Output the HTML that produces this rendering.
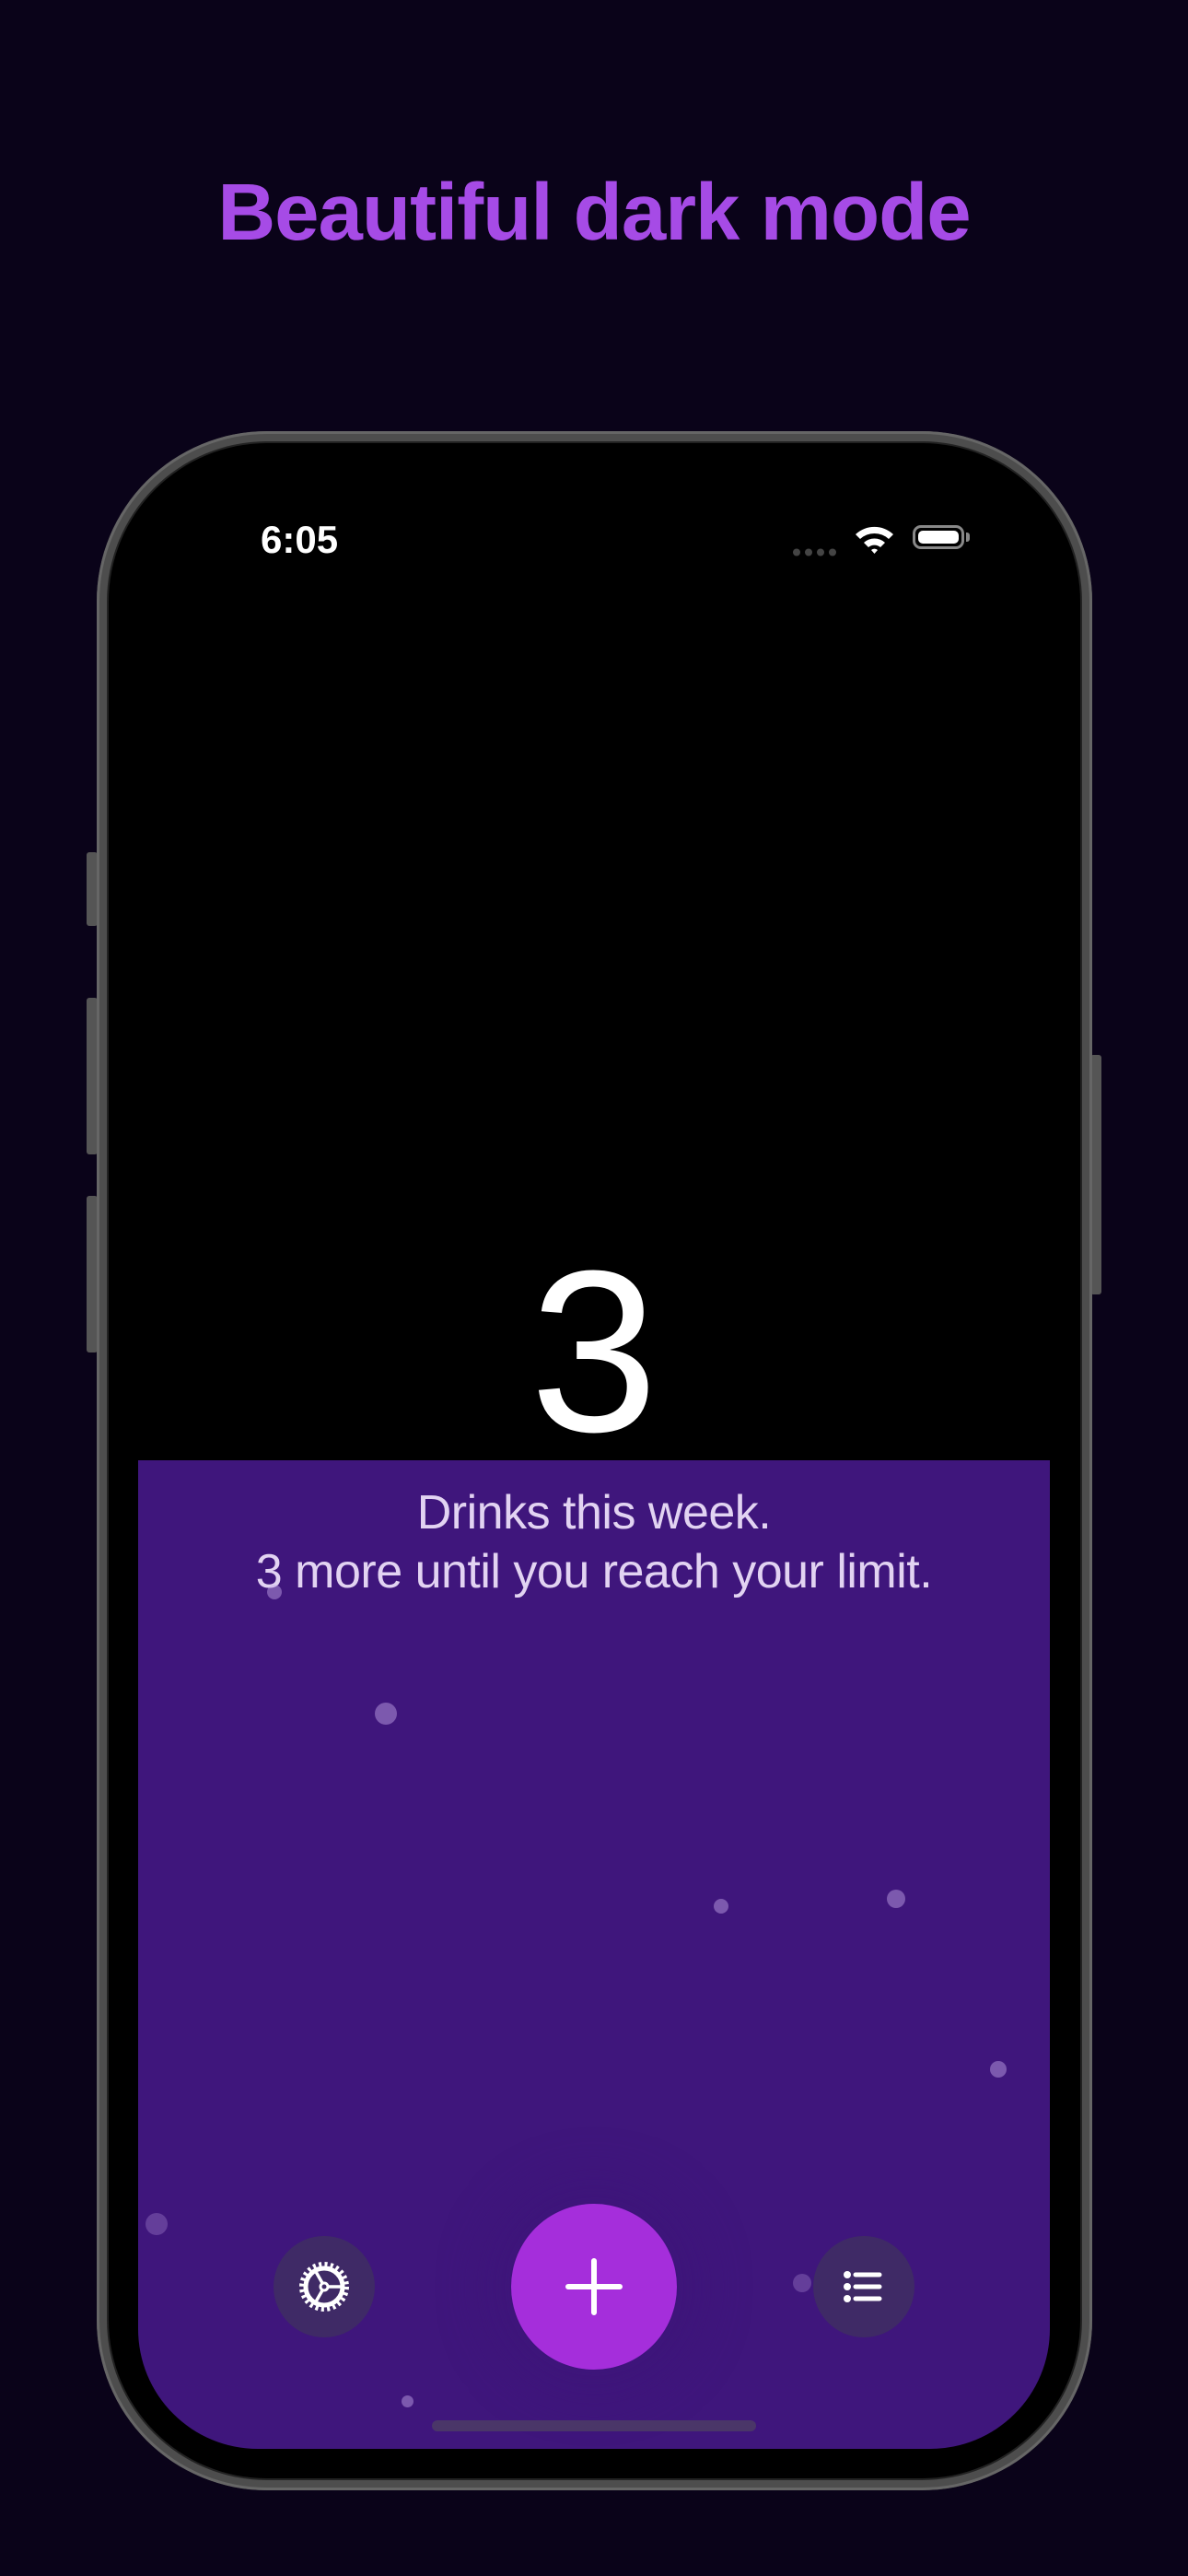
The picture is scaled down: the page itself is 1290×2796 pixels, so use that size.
<!DOCTYPE html>
<html><head><meta charset="utf-8"><style>
html,body{margin:0;padding:0}
body{width:1290px;height:2796px;background:#0a0319;position:relative;overflow:hidden;font-family:"Liberation Sans",sans-serif}
.abs{position:absolute}
.title{left:0;width:1290px;top:181px;text-align:center;color:#a64be6;font-weight:bold;font-size:87px;letter-spacing:-1px}
.frame{left:105px;top:468px;width:1081px;height:2235px;border-radius:185px;background:#4d4d4d;box-shadow:inset 0 0 0 3px #666}
.bezel{left:118px;top:481px;width:1055px;height:2209px;border-radius:172px;background:#000;box-shadow:0 0 0 2px #222}
.screen{left:150px;top:508px;width:990px;height:2150px;border-radius:130px;background:#000;overflow:hidden}
.purple{left:0;top:1077px;width:990px;height:1073px;background:#3f167c}
.dot{position:absolute;border-radius:50%;background:rgba(200,170,235,0.45)}
.btn{position:absolute;border-radius:50%;background:#3f2a66}
.btn.big{background:#a52edb}
.side{background:#555;border-radius:3px}
</style></head><body>
<div class="abs title">Beautiful dark mode</div>
<div class="abs side" style="left:94px;top:925px;width:12px;height:80px"></div>
<div class="abs side" style="left:94px;top:1083px;width:12px;height:170px"></div>
<div class="abs side" style="left:94px;top:1298px;width:12px;height:170px"></div>
<div class="abs side" style="left:1184px;top:1145px;width:12px;height:260px"></div>
<div class="abs frame"></div>
<div class="abs bezel"></div>
<div class="abs screen">
  <div class="abs" style="left:133px;top:54px;color:#fff;font-size:42px;font-weight:bold">6:05</div>
  <div class="abs" style="left:711px;top:83px;width:49px;height:9px">
    <svg width="49" height="9"><g fill="#444"><circle cx="4" cy="4.5" r="4"/><circle cx="17" cy="4.5" r="4"/><circle cx="30" cy="4.5" r="4"/><circle cx="43" cy="4.5" r="4"/></g></svg>
  </div>
  <svg class="abs" style="left:777px;top:62px" width="45" height="32" viewBox="0 0 45 32"><path d="M2 10 A30 30 0 0 1 43 10 L38 15 A23 23 0 0 0 7 15Z M11 19 A17 17 0 0 1 34 19 L29 24 A10 10 0 0 0 16 24Z M19 27 L22.5 31 L26 27 A5 5 0 0 0 19 27Z" fill="#fff"/></svg>
  <div class="abs" style="left:841px;top:62px;width:56px;height:26px;border:3px solid #888;border-radius:9px;box-sizing:border-box;padding:3px"><div style="width:100%;height:100%;background:#fff;border-radius:5px"></div></div>
  <div class="abs" style="left:899px;top:70px;width:4px;height:10px;background:#888;border-radius:0 3px 3px 0"></div>
  <div class="abs" style="left:0;width:990px;top:834px;text-align:center;color:#fff;font-size:250px;line-height:250px">3</div>
  <div class="abs purple">
    <div class="abs" style="left:0;width:990px;top:25px;text-align:center;color:#e2d3f2;font-size:52px;line-height:64px;letter-spacing:-0.5px">Drinks this week.<br>3 more until you reach your limit.</div>
    <div class="dot" style="left:140px;top:135px;width:16px;height:16px"></div>
    <div class="dot" style="left:257px;top:263px;width:24px;height:24px"></div>
    <div class="dot" style="left:625px;top:476px;width:16px;height:16px"></div>
    <div class="dot" style="left:813px;top:466px;width:20px;height:20px"></div>
    <div class="dot" style="left:925px;top:652px;width:18px;height:18px"></div>
    <div class="dot" style="left:8px;top:817px;width:24px;height:24px;opacity:.6"></div>
    <div class="dot" style="left:711px;top:883px;width:20px;height:20px;opacity:.6"></div>
    <div class="dot" style="left:286px;top:1015px;width:13px;height:13px"></div>
    <div class="btn" style="left:147px;top:842px;width:110px;height:110px">
      <svg width="110" height="110" viewBox="0 0 110 110"><g fill="none" stroke="#fff" stroke-width="5"><circle cx="55" cy="55" r="20"/><circle cx="55" cy="55" r="24" stroke-dasharray="3 3.3" stroke-width="6"/><circle cx="55" cy="55" r="4" stroke-width="3"/><path d="M59 55H75M53 51L45 37M53 59L45 73" stroke-width="3.5"/></g></svg>
    </div>
    <div class="btn big" style="left:405px;top:807px;width:180px;height:180px;box-shadow:0 0 60px 20px rgba(60,20,120,0.4)">
      <svg width="180" height="180"><path d="M90 62V118M62 90H118" stroke="#fff" stroke-width="6" stroke-linecap="round"/></svg>
    </div>
    <div class="btn" style="left:733px;top:842px;width:110px;height:110px">
      <svg width="110" height="110"><g fill="#fff"><circle cx="37" cy="42" r="4"/><circle cx="37" cy="55" r="4"/><circle cx="37" cy="68" r="4"/></g><path d="M46 42H72M46 55H72M46 68H72" stroke="#fff" stroke-width="5" stroke-linecap="round"/></svg>
    </div>
    <div class="abs" style="left:319px;top:1042px;width:352px;height:12px;border-radius:6px;background:#4a3668"></div>
  </div>
</div>
</body></html>
